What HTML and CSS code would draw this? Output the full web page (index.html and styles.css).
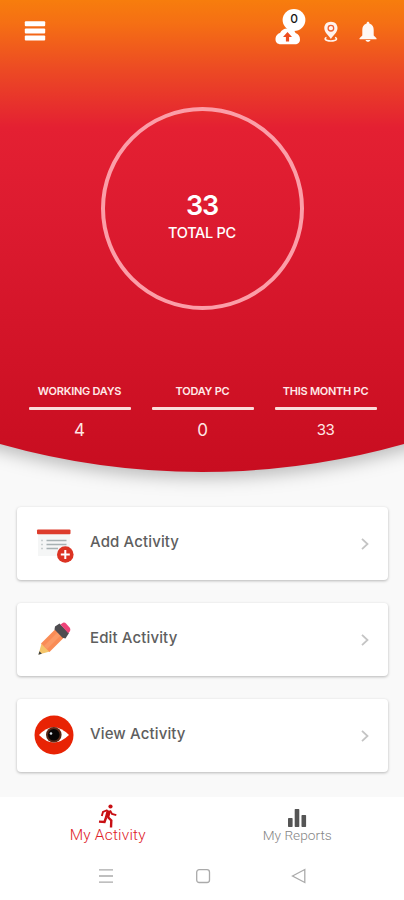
FILE: index.html
```
<!DOCTYPE html>
<html lang="en">
<head>
<meta charset="utf-8">
<title>My Activity</title>
<link rel="stylesheet" href="styles.css">
</head>
<body>
<div class="app">
  <header class="hero">
    <svg class="hero-bg" viewBox="0 0 404 510" aria-hidden="true">
      <defs>
        <linearGradient id="heat" x1="0" y1="0" x2="0" y2="472" gradientUnits="userSpaceOnUse">
          <stop offset="0" stop-color="#f77d0d"/>
          <stop offset=".05" stop-color="#f56f14"/>
          <stop offset=".15" stop-color="#ec4924"/>
          <stop offset=".27" stop-color="#e42032"/>
          <stop offset=".45" stop-color="#dd1b30"/>
          <stop offset="1" stop-color="#c80d20"/>
        </linearGradient>
      </defs>
      <path class="hero-shape" d="M-30 0H434V434Q404 444 404 444A743 743 0 0 1 0 444L-30 434Z" fill="url(#heat)"/>
    </svg>
    <div class="topbar">
      <svg class="menu" width="22" height="22" viewBox="0 0 22 22" fill="#fff"><rect x=".8" y="1.2" width="20.4" height="5" rx="1"/><rect x=".8" y="8.4" width="20.4" height="5" rx="1"/><rect x=".8" y="15.4" width="20.4" height="5" rx="1"/></svg>
      <div class="actions">
        <div class="sync">
          <svg width="32" height="36" viewBox="0 0 32 36"><path d="M6 35.300C2 35.300.5 33 .5 30.300C.5 27.300 2.500 24.500 5 24C6.500 21 9 19.500 12 19.500C17 19.500 19.500 21 20.500 24C23.500 25 25 27.500 25 30.500C25 33.300 23 35.300 20 35.300Z" fill="#fff"/><ellipse cx="19" cy="11" rx="11.400" ry="10.900" fill="#fff"/><path d="M12.500 23L17 28H14.100V32.500H10.900V28H8Z" fill="#ee4d20"/></svg>
          <span class="badge">0</span>
        </div>
        <svg class="pin" width="16" height="22" viewBox="0 0 16 22"><path d="M3.500 16.500C1 17.300 1.500 19.800 7.800 20C14.300 19.800 14.700 17.300 12 16.500" fill="none" stroke="#fff2ed" stroke-width="1.500"/><path d="M7.900.8C3.700.8 1.300 3.600 1.300 7.200C1.300 11.500 6 14.800 7.900 18C9.800 14.800 14.500 11.500 14.500 7.200C14.500 3.600 12.100.8 7.900.8Z" fill="#fff2ed"/><circle cx="7.900" cy="7.200" r="2.800" fill="none" stroke="#ef6032" stroke-width="1.300"/></svg>
        <svg class="bell" width="18" height="22" viewBox="0 0 18 22" fill="#fff8f4"><path d="M7.600 2.500C7.600.2 10.400.2 10.400 2.500C13.500 3.300 14.700 6 14.700 9V14.500L17.500 17.300V18.300H.5V17.300L3.300 14.500V9C3.300 6 4.500 3.300 7.600 2.500ZM6.500 19H11.500C11 21.400 7 21.400 6.500 19Z"/></svg>
      </div>
    </div>
    <div class="ring">
      <strong class="total">33</strong>
      <span class="total-label">TOTAL PC</span>
    </div>
    <div class="stats">
      <div class="stat"><span class="stat-name">WORKING DAYS</span><i class="rule"></i><span class="stat-value">4</span></div>
      <div class="stat"><span class="stat-name">TODAY PC</span><i class="rule"></i><span class="stat-value">0</span></div>
      <div class="stat"><span class="stat-name">THIS MONTH PC</span><i class="rule"></i><span class="stat-value small">33</span></div>
    </div>
  </header>

  <main class="cards">
    <a class="card">
      <svg width="40" height="40" viewBox="0 -2 40 40"><rect x="4" y="7" width="32" height="24" fill="#f5f6f6"/><rect x="3" y="4.600" width="33.500" height="4.600" rx="1" fill="#dd3c2c"/><g stroke="#a7b1b3" stroke-width="1.500"><path d="M12.500 15.500H32.500M12.500 19.500H32.500M12.500 23.500H24"/><path d="M7 15.500H9M7 19.500H9M7 23.500H9" stroke="#c9cfd0"/></g><circle cx="31.300" cy="29.500" r="8.300" fill="#dc3323"/><path d="M31.300 25V34M26.800 29.500H35.800" stroke="#fff" stroke-width="2"/></svg>
      <span class="card-title">Add Activity</span>
      <svg class="chevron" width="10" height="14" viewBox="0 0 10 14"><path d="M2 1.800L7.500 7L2 12.200"/></svg>
    </a>
    <a class="card">
      <svg width="40" height="40" viewBox="0 0 40 40"><path d="M7.500 24.500L4.500 35.500L16 32.500Z" fill="#f4c56a"/><path d="M5.400 32.300L4.400 35.700L7.900 34.700Z" fill="#3d4141"/><path d="M7 24.500L22.500 9L31 17.500L15.500 33Z" fill="#f98c56"/><path d="M10 27L25.500 11.500L28.500 14.500L13 30Z" fill="#fb9a66"/><path d="M20.500 10.500L21 7.500L25.500 4.500L35 14L31.500 19.500L28.500 18.700Z" fill="#4e4c50"/><path d="M26.500 5.500L29 3.700Q31 3.300 32 4.500L36 9Q37 11 35.500 13L34 14Z" fill="#ee4479"/></svg>
      <span class="card-title">Edit Activity</span>
      <svg class="chevron" width="10" height="14" viewBox="0 0 10 14"><path d="M2 1.800L7.500 7L2 12.200"/></svg>
    </a>
    <a class="card">
      <svg width="40" height="40" viewBox="0 0 40 40"><circle cx="20" cy="20" r="19.500" fill="#e82304"/><path d="M5 20Q19.500 4.500 35 20Q19.500 35 5 20Z" fill="#fff"/><circle cx="19.800" cy="19.800" r="7.800" fill="#5a2817"/><circle cx="19.800" cy="19.800" r="5.800" fill="#090606"/><circle cx="17" cy="18.500" r="1.300" fill="#dbe3ea"/></svg>
      <span class="card-title">View Activity</span>
      <svg class="chevron" width="10" height="14" viewBox="0 0 10 14"><path d="M2 1.800L7.500 7L2 12.200"/></svg>
    </a>
  </main>

  <footer class="footer">
    <nav class="tabs">
      <a class="tab active">
        <svg width="20" height="24" viewBox="0 0 20 24"><circle cx="12.500" cy="2.500" r="2.100" fill="#c80f13"/><g fill="none" stroke="#c80f13"><path d="M10.800 6.500L9 13.500" stroke-width="4.300"/><path d="M9.500 6L5 8L3.800 12M12 6.500L14 10L18.300 11.200" stroke-width="1.900"/><path d="M8.200 13L6.500 18L1 17.600M9.800 13L13.300 16.500L13 23.500" stroke-width="2.400"/></g></svg>
        <span>My Activity</span>
      </a>
      <a class="tab reports">
        <svg width="20" height="24" viewBox="0 0 20 24" fill="#555"><rect x="1" y="14" width="4.600" height="9" rx=".7"/><rect x="7.700" y="5" width="4.600" height="18" rx=".7"/><rect x="14.500" y="11" width="4.600" height="12" rx=".7"/></svg>
        <span>My Reports</span>
      </a>
    </nav>
    <div class="system">
      <svg width="16" height="16" viewBox="0 0 16 16"><path d="M1 1.800H15M1 8H15M1 14.200H15"/></svg>
      <svg width="16" height="16" viewBox="0 0 16 16"><rect x="1.700" y="1.700" width="12.800" height="12.800" rx="2.500"/></svg>
      <svg width="16" height="16" viewBox="0 0 16 16"><path d="M1.500 8L13.800 1.500V14.500Z"/></svg>
    </div>
  </footer>
</div>
</body>
</html>
```
FILE: styles.css
```
* { box-sizing: border-box; }
body { margin: 0; background: #f9f9f9; font-family: Inter, sans-serif; }
.app { width: 404px; height: 900px; display: flex; flex-direction: column; overflow: hidden; }

.hero { position: relative; height: 472px; flex: none; color: #fff; display: flex; flex-direction: column; align-items: center; }
.hero-bg { position: absolute; inset: 0 auto auto 0; width: 404px; height: 510px; z-index: -1; }
.hero-shape { filter: drop-shadow(0 5px 9px rgba(0, 0, 0, .27)); }

.topbar { width: 100%; height: 107px; padding: 9px 27px 0 24px; display: flex; justify-content: space-between; align-items: flex-start; }
.menu { margin-top: 11px; }
.actions { display: flex; align-items: flex-start; }
.sync { position: relative; width: 32px; height: 36px; }
.badge { position: absolute; left: 13px; top: 2px; width: 12px; text-align: center; font-size: 12px; line-height: 15px; font-weight: 500; color: #171717; }
.pin { margin: 12px 0 0 16px; }
.bell { margin: 12px 0 0 20px; }

.ring { width: 203px; height: 203px; border: 4px solid #fb9ea8; border-radius: 50%; display: flex; flex-direction: column; align-items: center; }
.total { margin-top: 77px; font-size: 27px; line-height: 36px; font-weight: 600; letter-spacing: -1.2px; }
.total-label { margin-top: 0; font-size: 14.500px; line-height: 18px; font-weight: 500; letter-spacing: -.3px; }

.stats { margin: 72px 0 0 1px; display: flex; gap: 21px; }
.stat { width: 102px; display: flex; flex-direction: column; align-items: center; white-space: nowrap; }
.stat-name { font-size: 11px; line-height: 18px; font-weight: 600; letter-spacing: -.25px; color: #ffe9e8; }
.rule { width: 102px; height: 3px; margin-top: 7px; border-radius: 1px; background: #fbdcda; }
.stat-value { margin-top: 8px; font-size: 17px; line-height: 24px; color: #ffe6e5; }
.small { font-size: 15px; letter-spacing: -.5px; }

.cards { padding: 35px 16px 0 17px; display: flex; flex-direction: column; gap: 23px; flex: 1; }
.card { height: 73px; padding: 0 18px 2px 17px; display: flex; align-items: center; background: #fff; border-radius: 4px; box-shadow: 0 1px 3px rgba(0, 0, 0, .27); }
.card-title { flex: 1; margin: -1px 0 0 16px; font-size: 15px; line-height: 22px; font-weight: 500; letter-spacing: .13px; color: #5e5e5e; }
.chevron { margin-top: 2px; fill: none; stroke: #c4c4c4; stroke-width: 1.800; }

.footer { height: 103px; flex: none; background: #fff; }
.tabs { height: 55px; padding: 0 12px 0 13px; display: flex; justify-content: space-between; font-family: Roboto, sans-serif; }
.tab { width: 190px; padding-top: 7px; display: flex; flex-direction: column; align-items: center; font-size: 15.500px; line-height: 15px; font-weight: 300; letter-spacing: .2px; color: #de2027; }
.tab.reports { font-size: 13.700px; letter-spacing: 0; color: #858585; }
.system { padding: 16px 97px 0 98px; display: flex; justify-content: space-between; }
.system svg { fill: none; stroke: #aaa; stroke-width: 1.300; }
```
